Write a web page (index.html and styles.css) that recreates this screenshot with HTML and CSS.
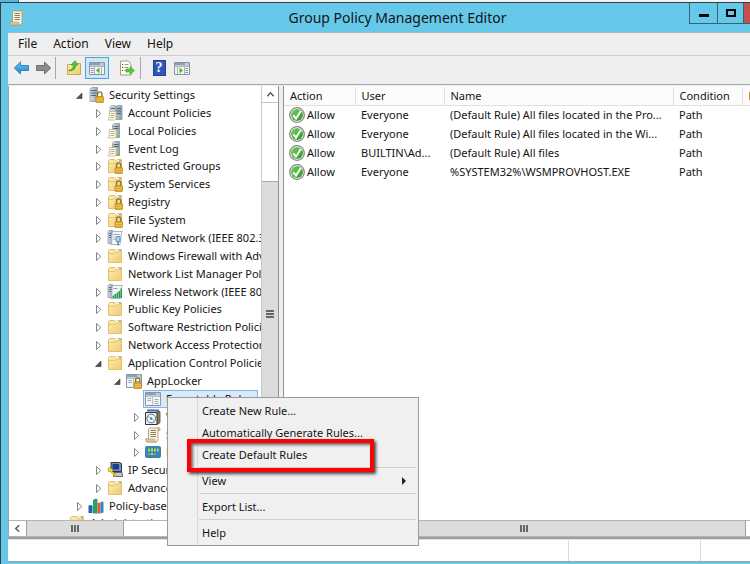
FILE: index.html
```html
<!DOCTYPE html>
<html lang="en">
<head>
<meta charset="utf-8">
<title>Group Policy Management Editor</title>
<link rel="stylesheet" href="styles.css">
</head>
<body>
<svg class="sprite" aria-hidden="true">
  <defs>
    <linearGradient id="gFolder" x1="0" y1="0" x2="1" y2="1"><stop offset="0" stop-color="#fdeeb4"/><stop offset="1" stop-color="#f0ca70"/></linearGradient>
    <linearGradient id="gGreen" x1="0" y1="0" x2="1" y2="1"><stop offset="0" stop-color="#7ccf62"/><stop offset="1" stop-color="#229a1c"/></linearGradient>
    <linearGradient id="gBlue" x1="0" y1="0" x2="0" y2="1"><stop offset="0" stop-color="#6bc9fa"/><stop offset="1" stop-color="#1583cf"/></linearGradient>
    <linearGradient id="gServer" x1="0" y1="0" x2="1" y2="0"><stop offset="0" stop-color="#dce3e8"/><stop offset="1" stop-color="#8fa0ac"/></linearGradient>
  </defs>
  <symbol id="lock" viewBox="0 0 16 16"><path d="M9.500 10V7.500a2.200 2.600 0 0 1 4.400 0V10" fill="none" stroke="#8d7433" stroke-width="1.400"/><rect x="8" y="9.500" width="7.500" height="6" rx=".6" fill="#dca52a" stroke="#b98a1c" stroke-width=".7"/><path d="M8.500 11.500h6.500M8.500 13.500h6.500" stroke="#f2cb62" stroke-width=".7"/></symbol>
  <symbol id="folder" viewBox="0 0 16 16"><path d="M1.500 14.500V2.500l1-1h5l1 1h1l1-1h4v13z" fill="url(#gFolder)" stroke="#e2bf6c"/><path d="M9.500 2.500h3" stroke="#fff"/><path d="M12 2.500h2" stroke="#6ab0e2"/><path d="M2 5.500h6.500l1-1.500h4.500" fill="none" stroke="#e6c677"/></symbol>
  <symbol id="folderlock" viewBox="0 0 16 16"><use href="#folder"/><use href="#lock"/></symbol>
  <symbol id="serverlock" viewBox="0 0 16 16"><path d="M2 2l2-1.500h5.500v14H2z" fill="url(#gServer)" stroke="#8798a4" stroke-width=".8"/><path d="M3 3.500h5.500M3 6h5.500M3 8.500h5" stroke="#53656f"/><use href="#lock"/></symbol>
  <symbol id="page" viewBox="0 0 16 16"><path d="M2.500 6.500h6.500v7q0 1.500-1.500 1.500H.8q1.200-.5 1.200-1.500z" fill="#fdf8e4" stroke="#c3b48a" stroke-width=".8"/><path d="M3.800 8.500h3.800M3.800 10.500h3.800M3.500 12.500h3.500" stroke="#a59b80" stroke-width=".8"/></symbol>
  <symbol id="account" viewBox="0 0 16 16"><path d="M3 2l1.500-1.200H9V11H3zM9 2l1.500-1.500H15V14.500H9z" fill="url(#gServer)" stroke="#8798a4" stroke-width=".8"/><path d="M4 3.500h4M10 3.500h4M10 6h4M10 8.500h4" stroke="#53656f"/><use href="#page"/><path d="M12.500 12.500h2v2h-2z" fill="#62d51f"/></symbol>
  <symbol id="local" viewBox="0 0 16 16"><path d="M5.500 2L7 .5h5.500v14h-7z" fill="url(#gServer)" stroke="#8798a4" stroke-width=".8"/><path d="M6.500 3.500h5M6.500 5.500h5" stroke="#53656f"/><use href="#page"/><path d="M10.500 12.500h2v2h-2z" fill="#62d51f"/></symbol>
  <symbol id="wired" viewBox="0 0 16 16"><path d="M1 1.500L2 .5h3.500v13H1z" fill="url(#gServer)" stroke="#8798a4" stroke-width=".8"/><path d="M2 3.500h2.500M2 5.500h2.500M2 7.500h2" stroke="#5d7180"/><path d="M6 1.500h9.500q-1 .5-1 2L13 14.500H3.500q1-.5 1.200-2L5 4q.2-2 1-2.500z" fill="#f4f5f6" stroke="#a3adb6" stroke-width=".9"/><path d="M6.500 4.500h6M6.500 7h1.500M6.300 9.500h1.500" stroke="#96a5b1"/><rect x="9" y="6.500" width="4" height="5" rx="1" fill="#b7d3f0" stroke="#4e88bb"/><path d="M11 11.500v4" stroke="#4e88bb" stroke-width="1.500"/></symbol>
  <symbol id="wireless" viewBox="0 0 16 16"><path d="M1 1.500L2 .5h3.500v13H1z" fill="url(#gServer)" stroke="#8798a4" stroke-width=".8"/><path d="M2 3.500h2.500M2 5.500h2.500M2 7.500h2" stroke="#5d7180"/><path d="M6 1.500h9.500q-1 .5-1 2L13.500 14.500H3.500q1-.5 1.200-2L5 4q.2-2 1-2.500z" fill="#f4f5f6" stroke="#a3adb6" stroke-width=".9"/><path d="M6.500 4.500h4" stroke="#96a5b1"/><path d="M5.500 11.500H7V14H5.500zM7.500 10H9v4H7.500zM9.500 8.500H11V14H9.500zM11.500 7H13v7h-1.500zM13.500 4.500H15V14h-1.500z" fill="#1c9b46"/></symbol>
  <symbol id="form" viewBox="0 0 16 16"><path d="M.5 1.500h15v13H.5z" fill="#f5f6f8" stroke="#8996a5"/><path d="M1 2h14v2.500H1z" fill="#8fa0b2"/><path d="M11 3h3.500" stroke="#fff"/><path d="M1 5.500h14M7.500 6v8" stroke="#b7c1cb"/><path d="M2.500 7.500h3.500M2.500 9.500h3.500M9.500 8.500h4M9.500 10.500h4M9.500 12.500h4" stroke="#9cabba"/></symbol>
  <symbol id="formlock" viewBox="0 0 16 16"><use href="#form"/><use href="#lock"/></symbol>
  <symbol id="disc" viewBox="0 0 16 16"><path d="M2 .5h12v2H2z" fill="#4767b3"/><path d="M.5 3.500h11.500v12H.5z" fill="#e9eef2" stroke="#263746"/><path d="M12.500 2.500h2.500v11l-2.500 2z" fill="#8e805c" stroke="#4a4636" stroke-width=".8"/><circle cx="6.200" cy="9.500" r="4.300" fill="#f9fbff" stroke="#5c6d7c"/><circle cx="6.200" cy="9.500" r="1.300" fill="#477cac"/><path d="M3 7.500l2 1M7.500 10.500l2 1" stroke="#7ac07a"/></symbol>
  <symbol id="scroll" viewBox="0 0 16 16"><path d="M4.500 1h10q-1.500.5-1.500 2v9.500q0 2-2 2.500H2q-1.500-.5-1-3h2.500V3q0-1.500 1-2z" fill="#fbf4d9" stroke="#ad9a70" stroke-width=".9"/><path d="M13 1h1.500q1 .5.500 2.500h-2zM1 12h8.500q0 2.500 1.500 3H2.500Q1 15 1 12z" fill="#d9c694" stroke="#ad9a70" stroke-width=".6"/><path d="M5.500 3.500h5.500M5.500 5.500h5.500M5.500 7.500h5.500M5.500 9.500h5.500" stroke="#867f70"/></symbol>
  <symbol id="apps" viewBox="0 0 16 16"><rect x=".5" y="2.500" width="15" height="11" rx="1" fill="#268cc6" stroke="#537d97"/><path d="M3 4.500h2v3H3zM9 4.500h2v3H9z" fill="#8de05c"/><path d="M6 4.500h2v3H6zM12 4.500h1.500v3H12z" fill="#ffc539"/><path d="M3 9h2v2H3zM9 9h2v2H9z" fill="#ef7340"/><path d="M6 9h2v2H6z" fill="#aee852"/></symbol>
  <symbol id="ipsec" viewBox="0 0 16 16"><path d="M4 .5h8.500l2 1v8H4z" fill="#8494a5" stroke="#253645"/><path d="M5.500 2h6.500v5.500H5.500z" fill="#183c9c"/><path d="M7 10.500h8l.5 4H6.500z" fill="#c4cbd3" stroke="#3c4856" stroke-width=".8"/><path d="M1 7.500Q1 5 3.500 6l2 1-.5 2 5 5-1.500 1-5-5.500-2 0z" fill="#f4e426" stroke="#8c8007" stroke-width=".6"/></symbol>
  <symbol id="chart" viewBox="0 0 16 16"><path d="M.5 7.500l3-.5 1 1v7h-4z" fill="#275fb2"/><path d="M5 2l3-1.500 1.500 1v14H5z" fill="#20a567"/><path d="M9.500 5l2-.5 1 1v10h-3z" fill="#ed5831"/><path d="M12.500 4l2.500-.5.500 1v10l-3 1z" fill="#288bd2"/></symbol>
  <symbol id="check" viewBox="0 0 16 16"><circle cx="8" cy="8" r="7.300" fill="#fff" stroke="#858585" stroke-width="1.300"/><circle cx="8" cy="8" r="6" fill="url(#gGreen)"/><path d="M4.300 8.300l2.700 3.200L11.800 4" fill="none" stroke="#fff" stroke-width="2"/></symbol>
  <symbol id="closed" viewBox="0 0 10 10"><path d="M3.500 1.500v8L7.800 5.500z" fill="#fff" stroke="#858585"/></symbol>
  <symbol id="open" viewBox="0 0 10 10"><path d="M8 3v5.500H2.500z" fill="#555" stroke="#333" stroke-width=".6"/></symbol>
  <symbol id="arrow-left" viewBox="0 0 16 14"><path d="M.8 7L7 1v3.500h8v5H7V13z"/></symbol>
  <symbol id="arrow-right" viewBox="0 0 16 14"><path d="M15.200 7L9 1v3.500H1v5h8V13z"/></symbol>
</svg>
<div class="backdrop"><span></span></div>
<main class="window">
  <header class="titlebar">
    <svg class="icon"><use href="#scroll"/></svg>
    <h1>Group Policy Management Editor</h1>
    <div class="winbtns">
      <button aria-label="Minimize"><span class="min"></span></button>
      <button aria-label="Maximize"><span class="max"></span></button>
      <button class="close" aria-label="Close"></button>
    </div>
  </header>
  <div class="client">
    <nav class="menubar"><button>File</button><button>Action</button><button>View</button><button>Help</button></nav>
    <div class="toolbar">
      <button aria-label="Back"><svg class="nav back"><use href="#arrow-left"/></svg></button>
      <button aria-label="Forward"><svg class="nav forward"><use href="#arrow-right"/></svg></button>
      <i class="divider"></i>
      <button aria-label="Up one level"><svg class="icon" viewBox="0 0 16 16"><path d="M1.500 14.500V4.500h6l1-1h6v11z" fill="url(#gFolder)" stroke="#cda64b"/><path d="M3 10q4 0 4.500-5H5L9 .8 12 5H10Q9.500 11 3 11z" fill="#4dc931" stroke="#2b961b" stroke-width=".6"/></svg></button>
      <button class="pressed" aria-label="Show console tree"><svg class="icon" viewBox="0 0 16 16"><path d="M.5 2.500h15v12H.5z" fill="#f3f4f6" stroke="#8794a3"/><path d="M1 3h14v2.500H1z" fill="#8e9eaf"/><path d="M11 4h3.500" stroke="#fff"/><path d="M1 6.500h14M5.500 7v7M12.500 7v7" stroke="#a9b4c0"/><path d="M2 8.500h2.500M2 10.500h2.500M2 12.500h2.500" stroke="#8494a4"/><path d="M10.500 7.500v6L7 10.500z" fill="#43bd2a"/></svg></button>
      <button aria-label="Export list"><svg class="icon" viewBox="0 0 16 16"><path d="M1.500 1h8l2.500 3v11H1.500z" fill="#fffdf0" stroke="#a39d84"/><path d="M3 4.500h1M3 7.500h1M3 10.500h1" stroke="#454545"/><path d="M5.500 4.500h4M5.500 7.500h4M5.500 10.500h3" stroke="#999"/><path d="M7 9h4V6.500l4.500 4-4.500 4V12H7z" fill="#57c936" stroke="#389d22" stroke-width=".6"/></svg></button>
      <i class="divider"></i>
      <button class="help" aria-label="Help"><span>?</span></button>
      <button aria-label="Show action pane"><svg class="icon" viewBox="0 0 16 16"><path d="M.5 2.500h15v12H.5z" fill="#f3f4f6" stroke="#8794a3"/><path d="M1 3h14v2.500H1z" fill="#8e9eaf"/><path d="M11 4h3.500" stroke="#fff"/><path d="M1 6.500h14M3.500 7v7M10.500 7v7" stroke="#a9b4c0"/><path d="M11.500 8.500H14M11.500 10.500H14M11.500 12.500H14" stroke="#8494a4"/><path d="M5.500 7.500v6L9 10.500z" fill="#43bd2a"/></svg></button>
    </div>
    <div class="panes">
      <section class="treepane">
        <div class="treeview">
          <ul class="tree" role="tree">
            <li><svg class="tw"><use href="#open"/></svg><svg class="icon"><use href="#serverlock"/></svg><span>Security Settings</span></li>
            <li class="l1"><svg class="tw"><use href="#closed"/></svg><svg class="icon"><use href="#account"/></svg><span>Account Policies</span></li>
            <li class="l1"><svg class="tw"><use href="#closed"/></svg><svg class="icon"><use href="#local"/></svg><span>Local Policies</span></li>
            <li class="l1"><svg class="tw"><use href="#closed"/></svg><svg class="icon"><use href="#local"/></svg><span>Event Log</span></li>
            <li class="l1"><svg class="tw"><use href="#closed"/></svg><svg class="icon"><use href="#folderlock"/></svg><span>Restricted Groups</span></li>
            <li class="l1"><svg class="tw"><use href="#closed"/></svg><svg class="icon"><use href="#folderlock"/></svg><span>System Services</span></li>
            <li class="l1"><svg class="tw"><use href="#closed"/></svg><svg class="icon"><use href="#folderlock"/></svg><span>Registry</span></li>
            <li class="l1"><svg class="tw"><use href="#closed"/></svg><svg class="icon"><use href="#folderlock"/></svg><span>File System</span></li>
            <li class="l1"><svg class="tw"><use href="#closed"/></svg><svg class="icon"><use href="#wired"/></svg><span>Wired Network (IEEE 802.3) Policies</span></li>
            <li class="l1"><svg class="tw"><use href="#closed"/></svg><svg class="icon"><use href="#folder"/></svg><span>Windows Firewall with Advanced Security</span></li>
            <li class="l1"><svg class="tw"></svg><svg class="icon"><use href="#folder"/></svg><span>Network List Manager Policies</span></li>
            <li class="l1"><svg class="tw"><use href="#closed"/></svg><svg class="icon"><use href="#wireless"/></svg><span>Wireless Network (IEEE 802.11) Policies</span></li>
            <li class="l1"><svg class="tw"><use href="#closed"/></svg><svg class="icon"><use href="#folder"/></svg><span>Public Key Policies</span></li>
            <li class="l1"><svg class="tw"><use href="#closed"/></svg><svg class="icon"><use href="#folder"/></svg><span>Software Restriction Policies</span></li>
            <li class="l1"><svg class="tw"><use href="#closed"/></svg><svg class="icon"><use href="#folder"/></svg><span>Network Access Protection</span></li>
            <li class="l1"><svg class="tw"><use href="#open"/></svg><svg class="icon"><use href="#folder"/></svg><span>Application Control Policies</span></li>
            <li class="l2"><svg class="tw"><use href="#open"/></svg><svg class="icon"><use href="#formlock"/></svg><span>AppLocker</span></li>
            <li class="l3"><svg class="tw"></svg><div class="selected"><svg class="icon"><use href="#form"/></svg><span>Executable Rules</span></div></li>
            <li class="l3"><svg class="tw"><use href="#closed"/></svg><svg class="icon"><use href="#disc"/></svg><span>Windows Installer Rules</span></li>
            <li class="l3"><svg class="tw"><use href="#closed"/></svg><svg class="icon"><use href="#scroll"/></svg><span>Script Rules</span></li>
            <li class="l3"><svg class="tw"><use href="#closed"/></svg><svg class="icon"><use href="#apps"/></svg><span>Packaged app Rules</span></li>
            <li class="l1"><svg class="tw"><use href="#closed"/></svg><svg class="icon"><use href="#ipsec"/></svg><span>IP Security Policies</span></li>
            <li class="l1"><svg class="tw"><use href="#closed"/></svg><svg class="icon"><use href="#folder"/></svg><span>Advanced Audit Policy</span></li>
            <li><svg class="tw"><use href="#closed"/></svg><svg class="icon"><use href="#chart"/></svg><span>Policy-based QoS</span></li>
            <li class="cut"><svg class="tw"></svg><svg class="icon"><use href="#folder"/></svg><span>Administrative Templates</span></li>
          </ul>
          <div class="vscroll"><div class="up"><svg viewBox="0 0 10 10"><path d="M1.500 7L5 3l3.500 4" fill="none" stroke="#555" stroke-width="1.500"/></svg></div><div class="vthumb"><i class="grip"></i></div></div>
        </div>
        <div class="hscroll"><div class="leftbtn"><svg viewBox="0 0 10 10"><path d="M7 1.500L3 5l4 3.500" fill="none" stroke="#555" stroke-width="1.500"/></svg></div><div class="hthumb"><i class="grip"></i></div></div>
      </section>
      <section class="listpane">
        <div class="listview">
          <table>
            <colgroup><col class="c-action"><col class="c-user"><col class="c-name"><col class="c-cond"><col class="c-exc"></colgroup>
            <thead><tr><th>Action</th><th>User</th><th>Name</th><th>Condition</th><th>Exceptions</th></tr></thead>
            <tbody>
              <tr><td><svg class="icon"><use href="#check"/></svg>Allow</td><td>Everyone</td><td>(Default Rule) All files located in the Pro...</td><td>Path</td><td></td></tr>
              <tr><td><svg class="icon"><use href="#check"/></svg>Allow</td><td>Everyone</td><td>(Default Rule) All files located in the Wi...</td><td>Path</td><td></td></tr>
              <tr><td><svg class="icon"><use href="#check"/></svg>Allow</td><td>BUILTIN\Ad...</td><td>(Default Rule) All files</td><td>Path</td><td></td></tr>
              <tr><td><svg class="icon"><use href="#check"/></svg>Allow</td><td>Everyone</td><td>%SYSTEM32%\WSMPROVHOST.EXE</td><td>Path</td><td></td></tr>
            </tbody>
          </table>
        </div>
        <div class="hscroll"><div class="hthumb"><i class="grip"></i></div></div>
      </section>
    </div>
    <footer class="statusbar"><span></span><span></span><span></span></footer>
  </div>
</main>
<div class="context" role="menu">
  <button role="menuitem">Create New Rule...</button>
  <button role="menuitem">Automatically Generate Rules...</button>
  <button role="menuitem" class="marked">Create Default Rules</button>
  <hr>
  <button role="menuitem">View<svg class="sub" viewBox="0 0 6 8"><path d="M1 0v8l4-4z" fill="#222"/></svg></button>
  <hr>
  <button role="menuitem">Export List...</button>
  <hr>
  <button role="menuitem">Help</button>
</div>
</body>
</html>
```
FILE: styles.css
```css
*, *::after { box-sizing: border-box; }
body {
  margin: 0;
  height: 100vh;
  overflow: hidden;
  display: flex;
  flex-direction: column;
  position: relative;
  background: #f0f0f0;
  color: #141414;
  font: 11px/16px "Noto Sans", "Open Sans", sans-serif;
}
button { font: inherit; color: inherit; background: none; border: 0; padding: 0; margin: 0; }
svg { display: block; flex: none; }
.sprite { position: absolute; width: 0; height: 0; }
.icon { width: 16px; height: 16px; }

.backdrop { height: 2px; flex: none; background: #f3f3f3; }
.backdrop span { display: block; width: 19px; height: 2px; background: #59b4dc; border-right: 1px solid #2478a8; }
.window {
  flex: 1;
  min-height: 0;
  display: flex;
  flex-direction: column;
  background: #66c9ea;
  border: solid #373e42;
  border-width: 1px 0 0 1px;
  padding: 0 0 2px 7px;
}
.titlebar { height: 29px; flex: none; display: flex; align-items: center; }
.titlebar .icon { margin-left: 1px; }
.titlebar h1 {
  flex: 1;
  margin: 0 0 0 81px;
  text-align: center;
  font-size: 14px;
  line-height: 20px;
  font-weight: 400;
  white-space: nowrap;
}
.winbtns { display: flex; align-self: flex-start; }
.winbtns button {
  width: 28px;
  height: 21px;
  display: grid;
  place-items: center;
  border: solid #34647a;
  border-width: 0 0 1px 1px;
}
.winbtns button + button { width: 26px; }
.winbtns button.close { width: 7px; background: #c4524c; }
.min { width: 10px; height: 3px; background: #000; margin-top: 4px; }
.max { width: 10px; height: 8px; border: 2px solid #000; }

.client {
  flex: 1;
  min-height: 0;
  display: flex;
  flex-direction: column;
  background: #efefef;
  border-top: 1px solid #a3b9c6;
  border-bottom: 1px solid #9aa3a8;
}
.menubar { height: 22px; flex: none; display: flex; align-items: center; gap: 16px; padding-left: 10px; font-size: 12px; }
.toolbar {
  height: 30px;
  flex: none;
  display: flex;
  align-items: center;
  border-top: 1px solid #cccdd0;
  border-bottom: 1px solid #a3a7b0;
  padding: 0 0 4px 2px;
}
.toolbar button { width: 22px; height: 22px; display: grid; place-items: center; }
.toolbar .pressed { width: 24px; background: #cfe8f8; border: 1px solid #4aa3dc; }
.toolbar .pressed + button { margin: 0 2px 0 8px; width: 20px; }
.nav { width: 17px; height: 14px; }
.back { fill: url(#gBlue); stroke: #3b86b6; }
.forward { fill: #8a8a8a; stroke: #6e6e6e; }
.divider { width: 1px; height: 22px; background: #a8a8a8; margin: 0 7px 0 1px; }
.help span {
  width: 13px;
  height: 16px;
  background: #3155bd;
  border: 1px solid #213e93;
  color: #fff;
  font: 700 14px/14px "Liberation Serif", serif;
}
.help + button { margin-left: 1px; }

.panes { flex: 1; min-height: 0; display: grid; grid-template-columns: 271px minmax(0, 1fr); gap: 4px; border-bottom: 2px solid #9a9da3; padding-top: 1px; }
.treepane, .listpane { background: #fff; display: flex; flex-direction: column; min-height: 0; min-width: 0; }
.treepane { border-left: 1px solid #9da1a8; border-right: 1px solid #8d929b; }
.listpane { border-left: 1px solid #8d929b; }
.treeview { flex: 1; min-height: 0; display: flex; }
.tree { flex: 1; min-width: 0; overflow: hidden; list-style: none; margin: 0; padding: 0; display: flex; flex-direction: column; }
.tree li { flex: 1 1 0; min-height: 0; display: flex; align-items: center; padding-left: 65px; white-space: nowrap; }
.tree .l1 { padding-left: 84px; }
.tree .l2 { padding-left: 103px; }
.tree .l3 { padding-left: 122px; }
.tree .cut { flex: 0 0 5px; padding-left: 46px; align-items: flex-start; overflow: hidden; }
.tw { width: 10px; height: 10px; margin-right: 4px; }
.tree .icon { margin-right: 5px; }
.selected { display: flex; align-items: center; height: 18px; margin-left: -2px; padding: 0 4px 0 1px; background: #d9e9fc; border: 1px solid #87b4e6; }
.vscroll { width: 17px; border-left: 1px solid #c9c9c9; display: flex; flex-direction: column; }
.up { height: 17px; border-bottom: 1px solid #c4c4c4; display: grid; place-items: center; }
.up svg, .leftbtn svg { width: 9px; height: 9px; }
.vthumb { flex: 1; margin-top: 78px; background: #dcdcdc; border-top: 1px solid #a9a9a9; padding: 128px 0 0 4px; }
.grip { display: block; }
.vthumb .grip { width: 8px; height: 8px; background: repeating-linear-gradient(#666 0 2px, #dcdcdc 2px 3px); }
.hscroll { height: 17px; flex: none; display: flex; border-top: 1px solid #b5b5b5; border-bottom: 1px solid #b5b5b5; }
.leftbtn { width: 17px; display: grid; place-items: center; }
.hthumb { background: #dcdcdc; border: solid #a0a0a0; border-width: 0 1px; display: grid; place-items: center; }
.hthumb .grip { width: 8px; height: 7px; background: repeating-linear-gradient(90deg, #666 0 2px, #dcdcdc 2px 3px); }
.treepane .hthumb { width: 98px; }
.listpane .hthumb { flex: 1; margin: 0 4px 0 17px; }

.listview { flex: 1; min-height: 0; overflow: hidden; padding-top: 1px; }
table { table-layout: fixed; width: 540px; border-collapse: collapse; }
.c-action { width: 71px; }
.c-user { width: 89px; }
.c-name { width: 229px; }
.c-cond { width: 69px; }
th { height: 18px; padding: 0 0 0 6px; text-align: left; font-weight: 400; background: #fcfcfc; border: solid #e0e0e0; border-width: 0 1px 1px 0; }
td { height: 19px; padding: 0 0 0 6px; white-space: nowrap; }
td:first-child { display: flex; align-items: center; gap: 2px; padding-left: 5px; }

.statusbar { height: 22px; flex: none; display: flex; background: #fff; border-top: 1px solid #e2e2e2; }
.statusbar span { width: 132px; border-right: 1px solid #dcdcdc; }
.statusbar span:first-child { flex: 1; }
.statusbar span:last-child { width: 49px; border: 0; }

.context {
  position: absolute;
  left: 167px;
  top: 397px;
  width: 252px;
  padding: 2px 2px 1px;
  display: flex;
  flex-direction: column;
  background: linear-gradient(90deg, transparent 29px, #dadada 29px 30px, transparent 30px) #f0f0f0;
  border: 1px solid #9b9b9b;
}
.context button { position: relative; height: 22px; display: flex; align-items: center; justify-content: space-between; text-align: left; padding: 0 9px 0 32px; }
.context hr { width: 217px; height: 1px; margin: 1px 0 2px auto; border: 0; background: #cfcfcf; }
.sub { width: 6px; height: 8px; }
.marked::after {
  content: "";
  position: absolute;
  left: 17px;
  top: -5px;
  width: 187px;
  height: 33px;
  border: 4px solid #fb0303;
  box-shadow: 2px 2px 3px #444, inset 2px 2px 3px #666;
}
```
